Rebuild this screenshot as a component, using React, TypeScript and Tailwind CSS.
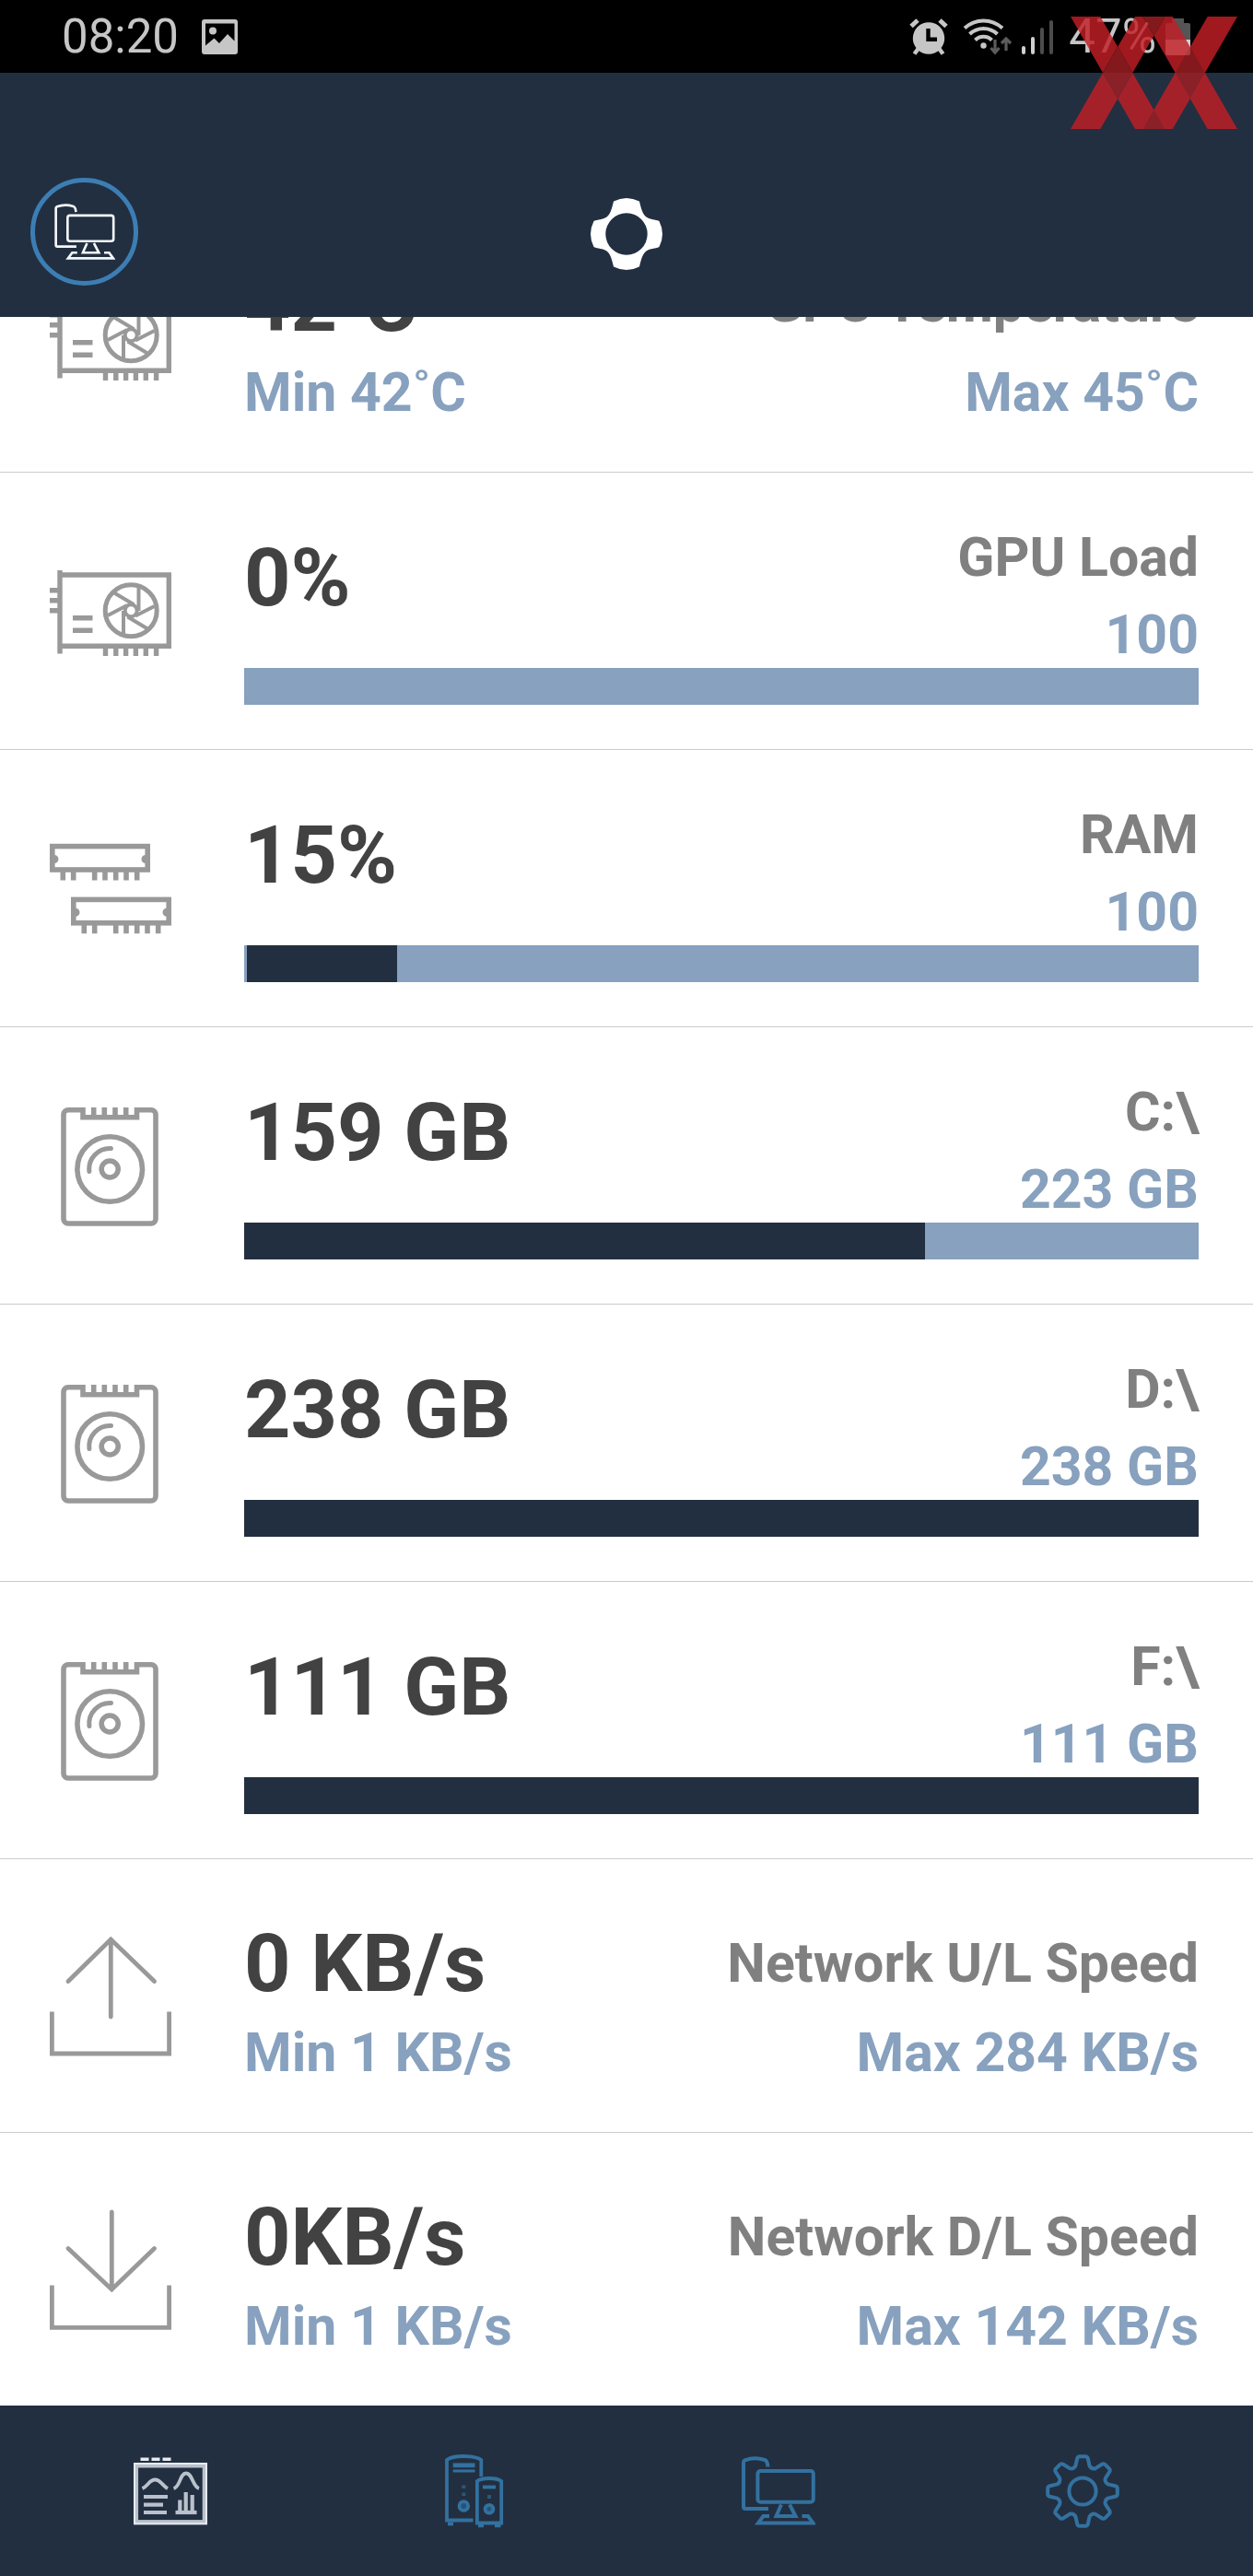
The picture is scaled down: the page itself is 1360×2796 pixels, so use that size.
import type { ReactNode } from "react";

/* ---------- sensor icons (132 x 132) ---------- */

function SensorSvg({ children, width }: { children: ReactNode; width: number }) {
  return (
    <svg viewBox="0 0 132 132" className="mt-[2px] size-[132px] shrink-0" fill="none" stroke="#999" strokeWidth={width} aria-hidden="true">
      {children}
    </svg>
  );
}

function GpuIcon() {
  return (
    <SensorSvg width={5.4}>
      <path d="M11 21V111.5M11 26H129.3V103.3H11" />
      <path d="M0 42.7H9M0 53.7H9M0 64.7H9" />
      <path d="M25 72.7H46.5M25 86.3H46.5" />
      <circle cx="88.2" cy="64.7" r="28" strokeWidth="5" />
      <circle cx="88.2" cy="64.7" r="6.5" strokeWidth="4" />
      <path d="M96.5 38V65M70 45.5L91 58M63 70L84 59M80 65V92M84.5 71.5L107 85M113.5 60L93 70.5" strokeWidth="4" />
      <path d="M60.5 105V114M71.8 105V114M82.6 105V114M93.4 105V114M104.3 105V114M115.6 105V114" />
    </SensorSvg>
  );
}

function RamStick() {
  return (
    <>
      <rect x="2.8" y="19.6" width="103.4" height="25.4" />
      <path d="M5 29a4.5 4.5 0 0 1 0 9zM104 29a4.5 4.5 0 0 0 0 9z" fill="#999" stroke="none" />
      <path d="M14.3 47V56.5M25.7 47V56.5M48.7 47V56.5M60 47V56.5M71.7 47V56.5M83 47V56.5M94.7 47V56.5" />
    </>
  );
}

function RamIcon() {
  return (
    <SensorSvg width={5.6}>
      <RamStick />
      <g transform="translate(23 57.8)">
        <RamStick />
      </g>
    </SensorSvg>
  );
}

function DriveIcon() {
  return (
    <SensorSvg width={5.6}>
      <path d="M36 2V12.8H94.5V2" />
      <path d="M36 4.7H20a5 5 0 0 0-5 5V123a5 5 0 0 0 5 5H110a5 5 0 0 0 5-5V9.7a5 5 0 0 0-5-5H94.5" />
      <path d="M47.7 2V13M59.3 2V13M71 2V13M82.7 2V13" />
      <circle cx="65.2" cy="69" r="35.3" />
      <circle cx="65.2" cy="69" r="9" />
      <path d="M42.9 71.5A22.4 22.4 0 0 1 66.5 46.6" strokeLinecap="round" strokeWidth="5" />
    </SensorSvg>
  );
}

function UploadIcon() {
  return (
    <SensorSvg width={4.8}>
      <path d="M2.4 82.4V128H129.6V82.4" />
      <path d="M66.3 4V88M20 49.5L66.3 4L113.5 49.5" strokeLinecap="round" />
    </SensorSvg>
  );
}

function DownloadIcon() {
  return (
    <SensorSvg width={4.8}>
      <path d="M2.4 82.4V128.3H129.6V82.4" />
      <path d="M67.3 3V87M20 42.5L67.3 87L113.5 42.5" strokeLinecap="round" />
    </SensorSvg>
  );
}

/* ---------- navigation icons (80 x 80) ---------- */

function DashboardIcon() {
  return (
    <svg viewBox="0 0 80 80" className="size-20" fill="none" stroke="#b9c1cc" strokeWidth="4.2" aria-hidden="true">
      <rect x="2.6" y="12" width="74.6" height="61.6" strokeWidth="5" />
      <rect x="1" y="10" width="78" height="65.3" stroke="#e6eaf0" strokeWidth="2" />
      <path d="M7.5 5.3H16.5M19.5 5.3H28.5M31.5 5.3H40.5" stroke="#e6eaf0" strokeWidth="3.4" />
      <path d="M9.5 37C16 34 17 27.5 23.3 27.5S31 34 37 37M43.5 37C51 35 50 20.5 57 20.5S64 35 71 37" strokeWidth="3.8" />
      <path d="M11 46H37M11 54.7H32M11 63H36" />
      <path d="M50.3 49.5V62M56.7 41V62M63.7 44V62" />
      <path d="M45.5 63H68.5" />
    </svg>
  );
}

function TowersIcon() {
  return (
    <svg viewBox="0 0 80 80" className="size-20" fill="none" stroke="#33719f" strokeWidth="3.8" aria-hidden="true">
      <path d="M38.5 71.5H10V6C14 2.8 20 2 28.3 2S43 2.8 47.3 6V24" />
      <path d="M16.7 11.8H40.5" strokeWidth="4.8" />
      <path d="M16.7 18H40.5" strokeWidth="3" />
      <path d="M28.3 33.5V37M28.3 41.5V45" strokeWidth="4" opacity="0.6" />
      <circle cx="28.3" cy="56" r="4.8" fill="#26527a" />
      <path d="M11 75.4H17" />
      <path d="M42.9 74.5V29C46 26.6 50 26 56 26S66 26.6 69.2 29V74.5Z" />
      <path d="M49 35.5H63" />
      <path d="M56 44V48" strokeWidth="4" opacity="0.6" />
      <circle cx="56" cy="59.3" r="4.4" fill="#26527a" />
      <path d="M44 77.4H50M62 77.4H68.5" />
    </svg>
  );
}

function ComputerIcon({ className, stroke, width }: { className: string; stroke: string; width: number }) {
  return (
    <svg viewBox="0 0 80 80" className={className} fill="none" stroke={stroke} strokeWidth={width} aria-hidden="true">
      <path d="M29 59H4Q2 59 2 56.7V8.5Q2 7 3.5 6.3Q14 2.6 25 6Q28 7 28.4 13.5" />
      <rect x="17.4" y="18" width="60.4" height="33.8" rx="3" />
      <path d="M43 54.5L37.5 67H58.5L52 54.5" />
      <path d="M30 67H23.5L18 74.4H77.5L72 67H65.5" />
    </svg>
  );
}

const gearTeeth = Array.from({ length: 8 }, (_, i) => {
  const a = (i * Math.PI) / 4;
  const p = (x: number, y: number) =>
    `${(40 + x * Math.cos(a) - y * Math.sin(a)).toFixed(2)} ${(40 + x * Math.sin(a) + y * Math.cos(a)).toFixed(2)}`;
  return `${i === 0 ? "M" : "L"}${p(-7.6, -27.5)}L${p(-5.8, -35.5)}Q${p(-5.2, -37.8)} ${p(-3, -37.8)}L${p(3, -37.8)}Q${p(5.2, -37.8)} ${p(5.8, -35.5)}L${p(7.6, -27.5)}Q${p(9.5, -23.8)} ${p(14.1, -24.8)}`;
}).join("");

function GearIcon() {
  return (
    <svg viewBox="0 0 80 80" className="size-20" fill="none" stroke="#33719f" strokeWidth="4" strokeLinejoin="round" aria-hidden="true">
      <path d={gearTeeth + "Z"} />
      <circle cx="40" cy="40" r="14.6" />
    </svg>
  );
}

/* ---------- status bar ---------- */

function PictureIcon() {
  return (
    <svg viewBox="0 0 39 38" className="h-[38px] w-[39px]" aria-hidden="true">
      <path
        fillRule="evenodd"
        fill="#c6c6c6"
        d="M3 0H36a3 3 0 0 1 3 3V35a3 3 0 0 1-3 3H3a3 3 0 0 1-3-3V3a3 3 0 0 1 3-3ZM4 4.5V28.5L13.5 20.5L19 26L28 16L35.5 23.5V4.5Z"
      />
      <circle cx="12" cy="12.5" r="4" fill="#c6c6c6" />
    </svg>
  );
}

function AlarmIcon() {
  return (
    <svg viewBox="0 0 42 40" className="h-10 w-[42px]" fill="none" stroke="#c6c6c6" aria-hidden="true">
      <circle cx="21" cy="21.5" r="17.2" fill="#c6c6c6" stroke="none" />
      <path d="M2 8.5L9 2M40 8.5L33 2" strokeWidth="5" />
      <path d="M9.5 33L5.5 38.5M32.5 33L36.5 38.5" strokeWidth="4.5" />
      <path d="M20.5 11V22.7H30" stroke="#000" strokeWidth="4.4" />
    </svg>
  );
}

function WifiIcon() {
  return (
    <svg viewBox="0 0 54 41" className="h-[41px] w-[54px]" fill="none" stroke="#c6c6c6" strokeWidth="4" aria-hidden="true">
      <path d="M2 11.5A30 30 0 0 1 43 11.5M7.5 18A21.5 21.5 0 0 1 37.5 18M13.5 24.5A12.5 12.5 0 0 1 31.5 24.5" />
      <circle cx="22.5" cy="30.5" r="3.2" fill="#c6c6c6" stroke="none" />
      <path d="M35 24V36.5M30.5 33L35 38L39.5 33M47 36V24.5M42 28L47 23L52 28" stroke="#5c5c5c" strokeWidth="3.2" />
    </svg>
  );
}

function SignalIcon() {
  return (
    <svg viewBox="0 0 34 38" className="h-[38px] w-[34px]" fill="none" strokeWidth="4" strokeLinecap="round" aria-hidden="true">
      <path d="M2 31V36M12 21V36" stroke="#d0d0d0" />
      <path d="M22 11V36M32 3V36" stroke="#4c4c4c" />
    </svg>
  );
}

function BatteryIcon() {
  return (
    <svg viewBox="0 0 27 40" className="h-10 w-[27px]" aria-hidden="true">
      <path d="M7 0H20V5H25a2 2 0 0 1 2 2V23H0V7a2 2 0 0 1 2-2H7Z" fill="#555" />
      <path d="M0 23H27V38a2 2 0 0 1-2 2H2a2 2 0 0 1-2-2Z" fill="#d0d0d0" />
    </svg>
  );
}

function Watermark() {
  return (
    <svg
      viewBox="0 0 181 122"
      className="pointer-events-none absolute top-[18px] right-[17px] z-10 h-[122px] w-[181px]"
      aria-hidden="true"
    >
      <g opacity="0.82">
        <path
          fill="#c21f26"
          d="M0 0H32.3L102.3 122H70ZM70 0L0 122H32.3L102.3 0ZM78.5 0H110.8L181 122H148.7ZM148.7 0H181L110.8 122H78.5Z"
        />
        <path
          fill="#a11f24"
          d="M35 61L51.2 32.8L67.3 61L51.2 89.1ZM113.6 61L129.7 32.8L145.9 61L129.7 89.1ZM78.5 0H102.3L90.4 20.9ZM78.5 122H102.3L90.4 101.1Z"
        />
      </g>
    </svg>
  );
}

function StatusBar() {
  return (
    <div className="flex h-[79px] shrink-0 items-center justify-between bg-black pr-[68px] pl-[67px] text-[51px] leading-none text-[#c6c6c6]">
      <div className="flex items-center gap-[25px]">
        <span>08:20</span>
        <PictureIcon />
      </div>
      <div className="flex items-center">
        <AlarmIcon />
        <span className="w-4" />
        <WifiIcon />
        <span className="w-[10px]" />
        <SignalIcon />
        <span className="ml-[17px] mr-[10px]">47%</span>
        <BatteryIcon />
      </div>
    </div>
  );
}

/* ---------- header ---------- */

function Header() {
  return (
    <header className="relative z-[1] grid h-[265px] shrink-0 grid-cols-3 items-end bg-[#222f40] px-[33px] pb-[34px]">
      <button type="button" aria-label="Select computer" className="flex size-[117px] items-center justify-center rounded-full border-[5px] border-[#3c7eb4]">
        <ComputerIcon className="size-[66px]" stroke="#f4f7fa" width={3.2} />
      </button>
      <svg viewBox="-39 -39 78 78" className="mb-[17px] size-[78px] justify-self-center" role="img" aria-label="Logo">
        <path
          fill="#fff"
          fillRule="evenodd"
          d="M-14 -35.5Q0 -42.5 14 -35.5C16 -27 17.5 -21.5 21.5 -18.5C26 -15.5 31 -16 35.5 -14Q42.5 0 35.5 14C31 16 26 15.5 21.5 18.5C17.5 21.5 16 27 14 35.5Q0 42.5 -14 35.5C-16 27 -17.5 21.5 -21.5 18.5C-26 15.5 -31 16 -35.5 14Q-42.5 0 -35.5 -14C-31 -16 -26 -15.5 -21.5 -18.5C-17.5 -21.5 -16 -27 -14 -35.5ZM0 -22.7A22.7 22.7 0 1 0 0 22.7A22.7 22.7 0 1 0 0 -22.7Z"
        />
      </svg>
    </header>
  );
}

/* ---------- sensor rows ---------- */

type RangeSensor = { kind: "range"; icon: ReactNode; value: string; label: string; min: string; max: string };
type BarSensor = { kind: "bar"; icon: ReactNode; value: string; label: string; max: string; percent: number; inset?: boolean };

const sensors: (RangeSensor | BarSensor)[] = [
  { kind: "range", icon: <GpuIcon />, value: "42˚C", label: "GPU Temperature", min: "Min 42˚C", max: "Max 45˚C" },
  { kind: "bar", icon: <GpuIcon />, value: "0%", label: "GPU Load", max: "100", percent: 0 },
  { kind: "bar", icon: <RamIcon />, value: "15%", label: "RAM", max: "100", percent: 15.8, inset: true },
  { kind: "bar", icon: <DriveIcon />, value: "159 GB", label: "C:\\", max: "223 GB", percent: 71.3 },
  { kind: "bar", icon: <DriveIcon />, value: "238 GB", label: "D:\\", max: "238 GB", percent: 100 },
  { kind: "bar", icon: <DriveIcon />, value: "111 GB", label: "F:\\", max: "111 GB", percent: 100 },
  { kind: "range", icon: <UploadIcon />, value: "0 KB/s", label: "Network U/L Speed", min: "Min 1 KB/s", max: "Max 284 KB/s" },
  { kind: "range", icon: <DownloadIcon />, value: "0KB/s", label: "Network D/L Speed", min: "Min 1 KB/s", max: "Max 142 KB/s" },
];

function RangeBody({ s }: { s: RangeSensor }) {
  return (
    <div className="min-w-0 flex-1 pt-[58px] pb-[52px]">
      <div className="flex items-center justify-between">
        <span className="text-[88px] leading-[110px] text-[#424242]">{s.value}</span>
        <span className="text-[59px] leading-[68px] text-[#808080]">{s.label}</span>
      </div>
      <div className="mt-2 flex justify-between text-[59px] leading-[68px] text-[#87a1be]">
        <span>{s.min}</span>
        <span>{s.max}</span>
      </div>
    </div>
  );
}

function BarBody({ s }: { s: BarSensor }) {
  return (
    <div className="min-w-0 flex-1 pt-[58px] pb-12">
      <div className="flex items-start justify-between">
        <span className="text-[88px] leading-[112px] text-[#424242]">{s.value}</span>
        <div className="flex flex-col gap-4 text-right text-[59px] leading-[68px]">
          <span className="text-[#808080]">{s.label}</span>
          <span className="text-[#87a1be]">{s.max}</span>
        </div>
      </div>
      <div
        role="progressbar"
        aria-label={s.label}
        aria-valuenow={s.percent}
        className={s.inset ? "mt-[2px] h-10 bg-[#87a1be] pl-[3px]" : "mt-[2px] h-10 bg-[#87a1be]"}
      >
        <div className="h-full bg-[#222f40]" style={{ width: `${s.percent}%` }} />
      </div>
    </div>
  );
}

/* ---------- page ---------- */

const tabs = [
  { name: "Dashboard", icon: <DashboardIcon /> },
  { name: "Systems", icon: <TowersIcon /> },
  { name: "Computer", icon: <ComputerIcon className="size-20" stroke="#33719f" width={4} /> },
  { name: "Settings", icon: <GearIcon /> },
];

export default function App() {
  return (
    <div className="relative flex h-screen flex-col overflow-hidden bg-white font-[Roboto,sans-serif]">
      <StatusBar />
      <Watermark />
      <Header />
      <main className="flex min-h-0 flex-1 flex-col-reverse overflow-y-auto [scrollbar-width:none]">
        <ul className="shrink-0 font-bold">
          {sensors.map((s) => (
            <li key={s.label} className="flex items-center gap-[79px] border-b border-[#cbcbcb] pr-[59px] pl-[54px] last:border-b-0">
              {s.icon}
              {s.kind === "bar" ? <BarBody s={s} /> : <RangeBody s={s} />}
            </li>
          ))}
        </ul>
      </main>
      <nav className="grid h-[185px] shrink-0 grid-cols-4 bg-[#222f40] px-5">
        {tabs.map((t) => (
          <button key={t.name} type="button" aria-label={t.name} className="flex items-center justify-center">
            {t.icon}
          </button>
        ))}
      </nav>
    </div>
  );
}
